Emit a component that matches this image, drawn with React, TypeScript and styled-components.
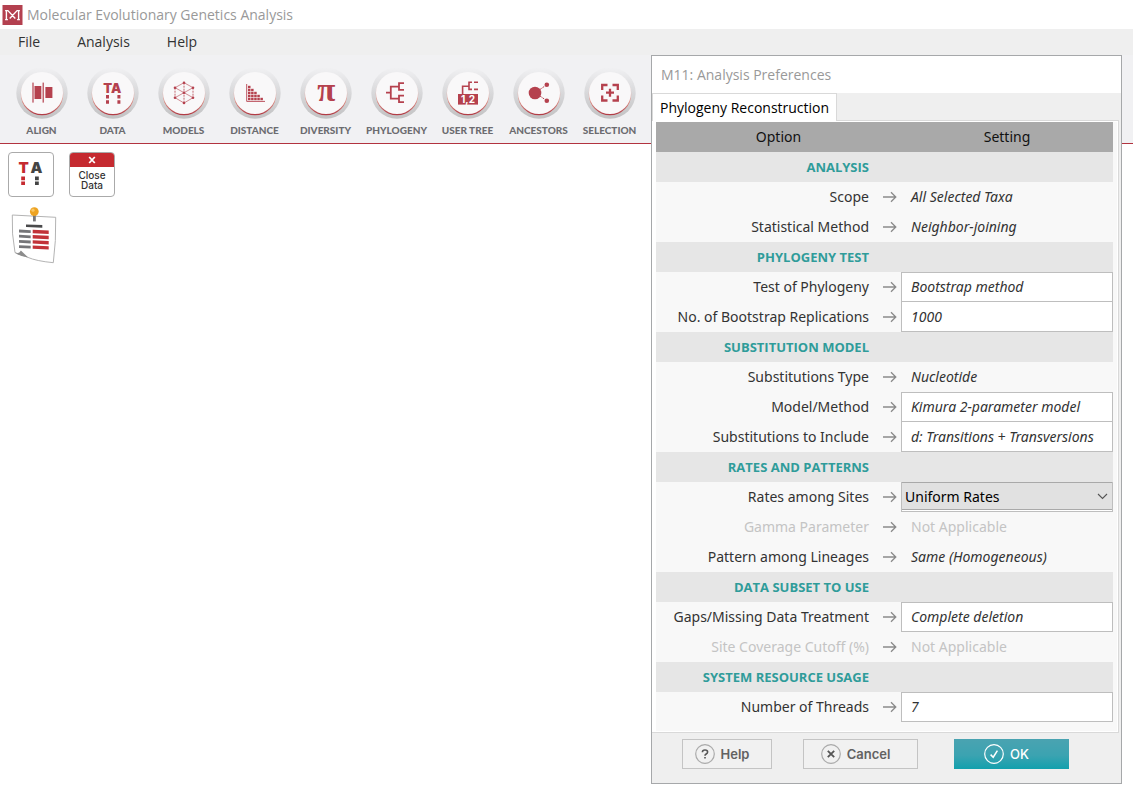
import React from "react";
import styled, { createGlobalStyle, css } from "styled-components";

const RED = "#b5414e";
const TEAL = "#2f9c9a";

const GlobalStyle = createGlobalStyle`
  *, *::before, *::after { box-sizing: border-box; }
  body {
    margin: 0;
    background: #fff;
    color: #333;
    font-family: "Open Sans", "Noto Sans", sans-serif;
    font-size: 14px;
  }
  button, input, select { font: inherit; color: inherit; margin: 0; }
`;

const Window = styled.div`
  position: relative;
  min-height: 100vh;
`;

const TitleBar = styled.header`
  display: flex;
  align-items: center;
  gap: 4px;
  height: 29px;
  padding-left: 2px;
  background: #fff;
`;

const WindowTitle = styled.h1`
  margin: 0;
  font-size: 14px;
  line-height: 29px;
  font-weight: 400;
  color: #999;
`;

const MenuBar = styled.nav`
  display: flex;
  gap: 37px;
  height: 26px;
  padding-left: 18px;
  background: #efefef;
`;

const MenuItem = styled.button`
  padding: 0;
  border: 0;
  background: none;
  line-height: 26px;
  color: #333;
`;

const Toolbar = styled.div`
  display: flex;
  height: 89px;
  padding: 12px 0 0 6px;
  background: #f1f1f3;
  border-bottom: 1px solid #b2333f;
`;

const ToolButton = styled.button`
  display: flex;
  flex-direction: column;
  align-items: center;
  flex: 0 0 71px;
  gap: 5px;
  padding: 0;
  border: 0;
  background: none;
  white-space: nowrap;
`;

const ToolLabel = styled.span`
  font-family: Lato, sans-serif;
  font-size: 10px;
  line-height: 13px;
  font-weight: 900;
  color: #6c6c70;
`;

const Workspace = styled.main`
  display: flex;
  flex-direction: column;
  align-items: flex-start;
  gap: 9px;
  padding: 8px;
`;

const DataActions = styled.div`
  display: flex;
  gap: 15px;
`;

const Tile = styled.button`
  display: flex;
  flex-direction: column;
  width: 46px;
  height: 45px;
  padding: 0;
  overflow: hidden;
  border: 1px solid #aaa;
  border-radius: 4px;
  background: #fff;
  font-family: Inter, sans-serif;
  font-size: 10px;
  line-height: 10px;
  font-weight: 500;
  text-align: center;
`;

const TileCap = styled.span`
  display: flex;
  align-items: center;
  justify-content: center;
  align-self: stretch;
  height: 14px;
  margin-bottom: 3px;
  background: #c52a30;
`;

const TileText = styled.span`
  align-self: center;
`;

const NoteButton = styled.button`
  display: flex;
  padding: 0;
  border: 0;
  background: none;
`;

const Dialog = styled.section`
  position: absolute;
  top: 55px;
  right: 11px;
  width: 471px;
  border: 1px solid #a6a8aa;
  background: #efefef;
`;

const DialogTitle = styled.h2`
  margin: 0;
  height: 37px;
  padding-left: 9px;
  background: #fff;
  font-size: 14px;
  line-height: 37px;
  font-weight: 400;
  color: #999;
`;

const TabPanel = styled.div`
  margin-right: 2px;
  padding: 1px 1px 1px 3px;
  border: 1px solid #d9d9d9;
  border-left-width: 0;
  background: #fff;
`;

const TabList = styled.div`
  display: flex;
  margin-bottom: -1px;
`;

const Tab = styled.button`
  position: relative;
  height: 28px;
  padding: 0 7px;
  border: 1px solid #d9d9d9;
  border-bottom: 0;
  background: #fff;
  color: #000;
  white-space: nowrap;
`;

const OptionsArea = styled.div`
  padding: 0 4px 9px 1px;
  background: #f8f8f8;
  box-shadow: inset 1px 0 #fff;
`;

const OptionsTable = styled.table`
  width: 100%;
  table-layout: fixed;
  border-collapse: collapse;
  font-family: "Noto Sans", "Open Sans", sans-serif;

  tr { height: 30px; }
  th, td { padding: 0; font-weight: 400; line-height: 20px; }
`;

const LabelColumn = styled.col`
  width: 213px;
`;

const ArrowColumn = styled.col`
  width: 32px;
`;

const HeadRow = styled.tr`
  background: #a9a9a9;
  color: #111;
`;

const SectionRow = styled.tr`
  background: #e6e6e6;
`;

const SectionName = styled.th`
  && {
    font-family: "Open Sans", "Noto Sans", sans-serif;
    font-size: 13px;
    font-weight: 700;
    text-align: right;
    color: ${TEAL};
  }
`;

const LabelCell = styled.th<{ $muted?: boolean }>`
  text-align: right;
  white-space: nowrap;
  color: ${(p) => (p.$muted ? "#c4c4c4" : "#333")};
`;

const ArrowCell = styled.td`
  svg { display: block; margin-left: 14px; }
`;

const Value = styled.span<{ $muted?: boolean }>`
  padding-left: 10px;
  font-style: ${(p) => (p.$muted ? "normal" : "italic")};
  color: ${(p) => (p.$muted ? "#c4c4c4" : "#333")};
`;

const Field = styled.input<{ $stacked?: boolean }>`
  display: block;
  width: 100%;
  height: 30px;
  padding: 0 9px 1px;
  border: 1px solid #bebebe;
  ${(p) => p.$stacked && css`border-top-width: 0;`}
  border-radius: 0;
  outline: 0;
  background: #fff;
  font-style: italic;
`;

const SelectFrame = styled.div`
  position: relative;
  height: 30px;
  border: 1px solid #bebebe;
  border-top: 0;
  background: #fff;

  svg { position: absolute; right: 4px; top: 11px; pointer-events: none; }
`;

const Select = styled.select`
  display: block;
  width: 100%;
  height: 28px;
  padding: 1px 3px 0;
  appearance: none;
  border: 1px solid #a9a9a9;
  border-width: 1px 0;
  border-radius: 0;
  outline: 0;
  background: #e1e1e1;
  color: #000;
`;

const DialogFooter = styled.footer`
  display: flex;
  gap: 36px;
  padding: 6px 30px 14px;
`;

const SecondaryActions = styled.div`
  display: flex;
  gap: 31px;
`;

const ActionButton = styled.button<{ $primary?: boolean; $wide?: boolean }>`
  display: flex;
  align-items: center;
  justify-content: center;
  gap: 6px;
  width: ${(p) => (p.$wide ? "115px" : "90px")};
  height: 30px;
  padding: 0 10px 0 0;
  border: 1px solid #c4c4c4;
  background: #f1f1f1;
  color: #626262;
  font-family: Inter, sans-serif;
  font-size: 13px;
  font-weight: 600;
  ${(p) =>
    p.$primary &&
    css`
      border: 0;
      background: linear-gradient(#4aa3b1, #3ba3b1 55%, #12a0ad);
      color: #fff;
      font-weight: 500;
    `}
`;

const Logo = () => (
  <svg width="21" height="20" viewBox="0 0 20 20" aria-hidden="true">
    <rect width="20" height="20" fill="#b3404f" />
    <path
      d="M2.6 5.6H5.4L12.8 13.4M17.4 5.6H14.6L7.2 13.4M3.9 5.6V14.6M16.1 5.6V14.6M2.6 14.6H5.4M14.6 14.6H17.4"
      fill="none"
      stroke="#fff"
      strokeWidth="1.4"
    />
  </svg>
);

const AlignArt = () => (
  <g fill={RED}>
    <rect x="16.4" y="15.6" width="1.2" height="20" />
    <rect x="18.5" y="19" width="6.8" height="13" />
    <rect x="26.6" y="15.6" width="1.2" height="20" />
    <rect x="29.4" y="20" width="7" height="11" />
  </g>
);

const DataArt = () => (
  <g fill={RED}>
    <text x="16.3" y="26.3" fontFamily="Inter, sans-serif" fontWeight="900" fontSize="13">
      TA
    </text>
    <path d="M19 28h3v3.6h-3zM19 33.2h3v3.6h-3zM30.4 28h3v3.6h-3zM30.4 33.2h3v3.6h-3z" />
  </g>
);

const ModelsArt = () => (
  <g fill={RED} stroke={RED}>
    <path
      d="M26 15.7L17 20.7L26 25.7L35 20.7ZM17 30.7L26 25.7L35 30.7L26 36Z"
      fill="none"
      strokeWidth=".6"
    />
    <path
      d="M17 20.7V30.7M35 20.7V30.7M26 15.7V36"
      fill="none"
      strokeWidth=".8"
      strokeDasharray="2 1"
    />
    {[[26, 15.7], [17, 20.7], [35, 20.7], [26, 25.7], [17, 30.7], [35, 30.7], [26, 36]].map(
      ([x, y]) => (
        <circle key={`${x}-${y}`} cx={x} cy={y} r="1.3" stroke="none" />
      )
    )}
  </g>
);

const DistanceArt = () => (
  <g fill={RED}>
    <path d="M17.7 17V34.4H36" fill="none" stroke={RED} strokeWidth=".9" />
    {[5, 4, 3, 2, 1].map((count, col) =>
      Array.from({ length: count }, (_, row) => (
        <rect
          key={`${col}-${row}`}
          x={19 + col * 3.1}
          y={30.8 - row * 3}
          width="2.5"
          height="2.4"
        />
      ))
    )}
  </g>
);

const DiversityArt = () => (
  <text
    x="26.3"
    y="34"
    textAnchor="middle"
    fill={RED}
    fontFamily="Liberation Serif, serif"
    fontWeight="700"
    fontSize="33"
  >
    π
  </text>
);

const PhylogenyArt = () => (
  <path
    d="M15 25.7H19.8M28 19.7H19.8V31.7H28M33 16.2H28V22.9H33M33 28.6H28V35.2H33"
    fill="none"
    stroke={RED}
    strokeWidth="1.8"
  />
);

const UserTreeArt = () => (
  <g>
    <path d="M20.6 27V19.2H27M30 15.3H27V22.4H30" fill="none" stroke={RED} strokeWidth="1.6" />
    <path d="M32 15.3H36M32 22.4H36" stroke={RED} strokeWidth="1.6" />
    <rect x="16" y="27" width="20" height="10.6" fill={RED} />
    <text
      x="26"
      y="35.8"
      textAnchor="middle"
      fill="#fff"
      fontFamily="Inter, sans-serif"
      fontWeight="700"
      fontSize="10"
    >
      1,2
    </text>
  </g>
);

const AncestorsArt = () => (
  <g fill={RED}>
    <circle cx="22" cy="26" r="6.3" />
    <circle cx="33.8" cy="17.7" r="2.3" />
    <circle cx="33.8" cy="33.7" r="2.3" />
    <path
      d="M27 22.5L33 18.2M27 29L33 33.2"
      fill="none"
      stroke={RED}
      strokeWidth="1"
      strokeDasharray="2 1"
    />
  </g>
);

const SelectionArt = () => (
  <path
    d="M23.5 18H18.2V23M28.5 18H33.8V23M18.2 28.5V33.5H23.5M33.8 28.5V33.5H28.5M26 21.7V29.7M22 25.7H30"
    fill="none"
    stroke={RED}
    strokeWidth="2.3"
  />
);

const TOOLS: { label: string; art: React.ReactNode }[] = [
  { label: "ALIGN", art: <AlignArt /> },
  { label: "DATA", art: <DataArt /> },
  { label: "MODELS", art: <ModelsArt /> },
  { label: "DISTANCE", art: <DistanceArt /> },
  { label: "DIVERSITY", art: <DiversityArt /> },
  { label: "PHYLOGENY", art: <PhylogenyArt /> },
  { label: "USER TREE", art: <UserTreeArt /> },
  { label: "ANCESTORS", art: <AncestorsArt /> },
  { label: "SELECTION", art: <SelectionArt /> },
];

const Dial = ({ children }: { children: React.ReactNode }) => (
  <svg width="52" height="52" viewBox="0 0 52 52" aria-hidden="true">
    <circle cx="26" cy="26" r="25.7" fill="url(#dial-rim)" />
    <circle cx="26" cy="27" r="21.3" fill="url(#dial-edge)" />
    <circle cx="26" cy="26" r="21" fill="#f9f8f9" />
    {children}
  </svg>
);

const DialPaints = () => (
  <svg width="0" height="0" style={{ display: "block" }} aria-hidden="true">
    <defs>
      <linearGradient id="dial-rim" x1="0" y1="0" x2="0" y2="1">
        <stop offset="0" stopColor="#f1f1f3" />
        <stop offset=".5" stopColor="#d8d8da" />
        <stop offset="1" stopColor="#c2c2c3" />
      </linearGradient>
      <linearGradient id="dial-edge" x1="0" y1="0" x2="0" y2="1">
        <stop offset=".3" stopColor="#eedfdd" />
        <stop offset=".7" stopColor="#d98880" />
        <stop offset="1" stopColor="#b03843" />
      </linearGradient>
    </defs>
  </svg>
);

const SequenceArt = () => (
  <svg width="44" height="43" viewBox="0 0 44 43" aria-hidden="true">
    <g fontFamily="Inter, sans-serif" fontWeight="900" fontSize="15">
      <text x="9.5" y="20.4" fill="#c52a30">T</text>
      <text x="21.6" y="20.4" fill="#444">A</text>
    </g>
    <path d="M12.2 23.6h3.8v3.6h-3.8zM12.2 28.4h3.8v3.6h-3.8z" fill="#c52a30" />
    <path d="M26 23.6h3.8v3.6h-3.8zM26 28.4h3.8v3.6h-3.8z" fill="#444" />
  </svg>
);

const NoteArt = () => (
  <svg width="50" height="58" viewBox="0 0 50 58" aria-hidden="true">
    <path
      d="M4.3 9L47.7 11.3Q48.2 35 45.3 56.7Q28 55 19.7 51.3L7 46.5Q3.5 28 4.3 9Z"
      fill="#fff"
      stroke="#aaa"
      strokeWidth=".9"
    />
    <path d="M6.5 46.5Q11 48.5 12.9 44.6L20.3 51.6Q12 50.5 6.5 46.5Z" fill="#8c8c8c" />
    <rect x="25" y="9" width="2.8" height="6.4" fill="#77777a" />
    <circle cx="26.3" cy="5.6" r="4.4" fill="#eda322" />
    <circle cx="25" cy="4.2" r="1.6" fill="#f9c766" />
    <path d="M18 18.4L34.3 19V21.7L18 21.1Z" fill="#4a4a4c" />
    {[0, 5.2, 10.4, 15.6].map((dy) => (
      <g key={dy} transform={`translate(0 ${dy})`}>
        <path d="M11 23.6L22.7 24.2V27L11 26.4Z" fill="#757578" />
        <path d="M24.7 23.8L40.7 24.6V28L24.7 27.2Z" fill="#c23238" />
      </g>
    ))}
  </svg>
);

const Arrow = () => (
  <svg width="14" height="12" viewBox="0 0 14 12" aria-hidden="true">
    <path d="M0 6H13M8 1.3L12.8 6L8 10.7" fill="none" stroke="#8a8a8a" strokeWidth="1.3" />
  </svg>
);

const Chevron = () => (
  <svg width="11" height="7" viewBox="0 0 11 7" aria-hidden="true">
    <path d="M1 1L5.5 5.5L10 1" fill="none" stroke="#555" strokeWidth="1.1" />
  </svg>
);

const Ring = ({ stroke, children }: { stroke: string; children: React.ReactNode }) => (
  <svg width="20" height="20" viewBox="0 0 20 20" aria-hidden="true">
    <circle cx="10" cy="10" r="9.3" fill="none" stroke={stroke} strokeWidth="1.2" />
    {children}
  </svg>
);

type Row = {
  label: string;
  value?: string;
  kind?: "section" | "text" | "field" | "select" | "muted";
  stacked?: boolean;
};

const ROWS: Row[] = [
  { label: "ANALYSIS", kind: "section" },
  { label: "Scope", value: "All Selected Taxa" },
  { label: "Statistical Method", value: "Neighbor-joining" },
  { label: "PHYLOGENY TEST", kind: "section" },
  { label: "Test of Phylogeny", value: "Bootstrap method", kind: "field" },
  { label: "No. of Bootstrap Replications", value: "1000", kind: "field", stacked: true },
  { label: "SUBSTITUTION MODEL", kind: "section" },
  { label: "Substitutions Type", value: "Nucleotide" },
  { label: "Model/Method", value: "Kimura 2-parameter model", kind: "field" },
  { label: "Substitutions to Include", value: "d: Transitions + Transversions", kind: "field", stacked: true },
  { label: "RATES AND PATTERNS", kind: "section" },
  { label: "Rates among Sites", value: "Uniform Rates", kind: "select" },
  { label: "Gamma Parameter", value: "Not Applicable", kind: "muted" },
  { label: "Pattern among Lineages", value: "Same (Homogeneous)" },
  { label: "DATA SUBSET TO USE", kind: "section" },
  { label: "Gaps/Missing Data Treatment", value: "Complete deletion", kind: "field" },
  { label: "Site Coverage Cutoff (%)", value: "Not Applicable", kind: "muted" },
  { label: "SYSTEM RESOURCE USAGE", kind: "section" },
  { label: "Number of Threads", value: "7", kind: "field" },
];

const OptionRow = ({ row, id }: { row: Row; id: string }) => {
  if (row.kind === "section") {
    return (
      <SectionRow>
        <SectionName scope="row">{row.label}</SectionName>
        <td colSpan={2} />
      </SectionRow>
    );
  }
  const muted = row.kind === "muted";
  const editable = row.kind === "field" || row.kind === "select";
  return (
    <tr>
      <LabelCell scope="row" $muted={muted}>
        {editable ? <label htmlFor={id}>{row.label}</label> : row.label}
      </LabelCell>
      <ArrowCell>
        <Arrow />
      </ArrowCell>
      <td>
        {row.kind === "field" && (
          <Field id={id} type="text" defaultValue={row.value} $stacked={row.stacked} />
        )}
        {row.kind === "select" && (
          <SelectFrame>
            <Select id={id} defaultValue={row.value}>
              <option>{row.value}</option>
            </Select>
            <Chevron />
          </SelectFrame>
        )}
        {!editable && <Value $muted={muted}>{row.value}</Value>}
      </td>
    </tr>
  );
};

export default function App() {
  return (
    <Window>
      <GlobalStyle />
      <DialPaints />
      <TitleBar>
        <Logo />
        <WindowTitle>Molecular Evolutionary Genetics Analysis</WindowTitle>
      </TitleBar>
      <MenuBar>
        <MenuItem>File</MenuItem>
        <MenuItem>Analysis</MenuItem>
        <MenuItem>Help</MenuItem>
      </MenuBar>
      <Toolbar>
        {TOOLS.map((tool) => (
          <ToolButton key={tool.label}>
            <Dial>{tool.art}</Dial>
            <ToolLabel>{tool.label}</ToolLabel>
          </ToolButton>
        ))}
      </Toolbar>
      <Workspace>
        <DataActions>
          <Tile aria-label="Sequence data">
            <SequenceArt />
          </Tile>
          <Tile>
            <TileCap>
              <svg width="8" height="8" viewBox="0 0 8 8" aria-hidden="true">
                <path d="M1.2 1L6.8 7M6.8 1L1.2 7" stroke="#fff" strokeWidth="1.8" />
              </svg>
            </TileCap>
            <TileText>Close</TileText>
            <TileText>Data</TileText>
          </Tile>
        </DataActions>
        <NoteButton aria-label="Notes">
          <NoteArt />
        </NoteButton>
      </Workspace>

      <Dialog role="dialog" aria-labelledby="dialog-title">
        <DialogTitle id="dialog-title">M11: Analysis Preferences</DialogTitle>
        <TabList role="tablist">
          <Tab role="tab" aria-selected="true">Phylogeny Reconstruction</Tab>
        </TabList>
        <TabPanel role="tabpanel">
          <OptionsArea>
            <OptionsTable>
              <colgroup>
                <LabelColumn />
                <ArrowColumn />
                <col />
              </colgroup>
              <thead>
                <HeadRow>
                  <th scope="col" colSpan={2}>Option</th>
                  <th scope="col">Setting</th>
                </HeadRow>
              </thead>
              <tbody>
                {ROWS.map((row, i) => (
                  <OptionRow key={row.label} row={row} id={`option-${i}`} />
                ))}
              </tbody>
            </OptionsTable>
          </OptionsArea>
        </TabPanel>
        <DialogFooter>
          <SecondaryActions>
            <ActionButton>
              <Ring stroke="#aaa">
                <path
                  d="M7.4 8.2Q7.4 6 10 6Q12.6 6 12.6 8Q12.6 9.2 11.2 10Q10 10.7 10 11.8M10 13V14.6"
                  fill="none"
                  stroke="#555"
                  strokeWidth="1.6"
                />
              </Ring>
              Help
            </ActionButton>
            <ActionButton $wide>
              <Ring stroke="#aaa">
                <path d="M6.8 6.8L13.2 13.2M13.2 6.8L6.8 13.2" stroke="#555" strokeWidth="1.8" />
              </Ring>
              Cancel
            </ActionButton>
          </SecondaryActions>
          <ActionButton $primary $wide>
            <Ring stroke="#fff">
              <path d="M6.6 10.6L9.2 13.2L13.4 6.6" fill="none" stroke="#fff" strokeWidth="1.5" />
            </Ring>
            OK
          </ActionButton>
        </DialogFooter>
      </Dialog>
    </Window>
  );
}
